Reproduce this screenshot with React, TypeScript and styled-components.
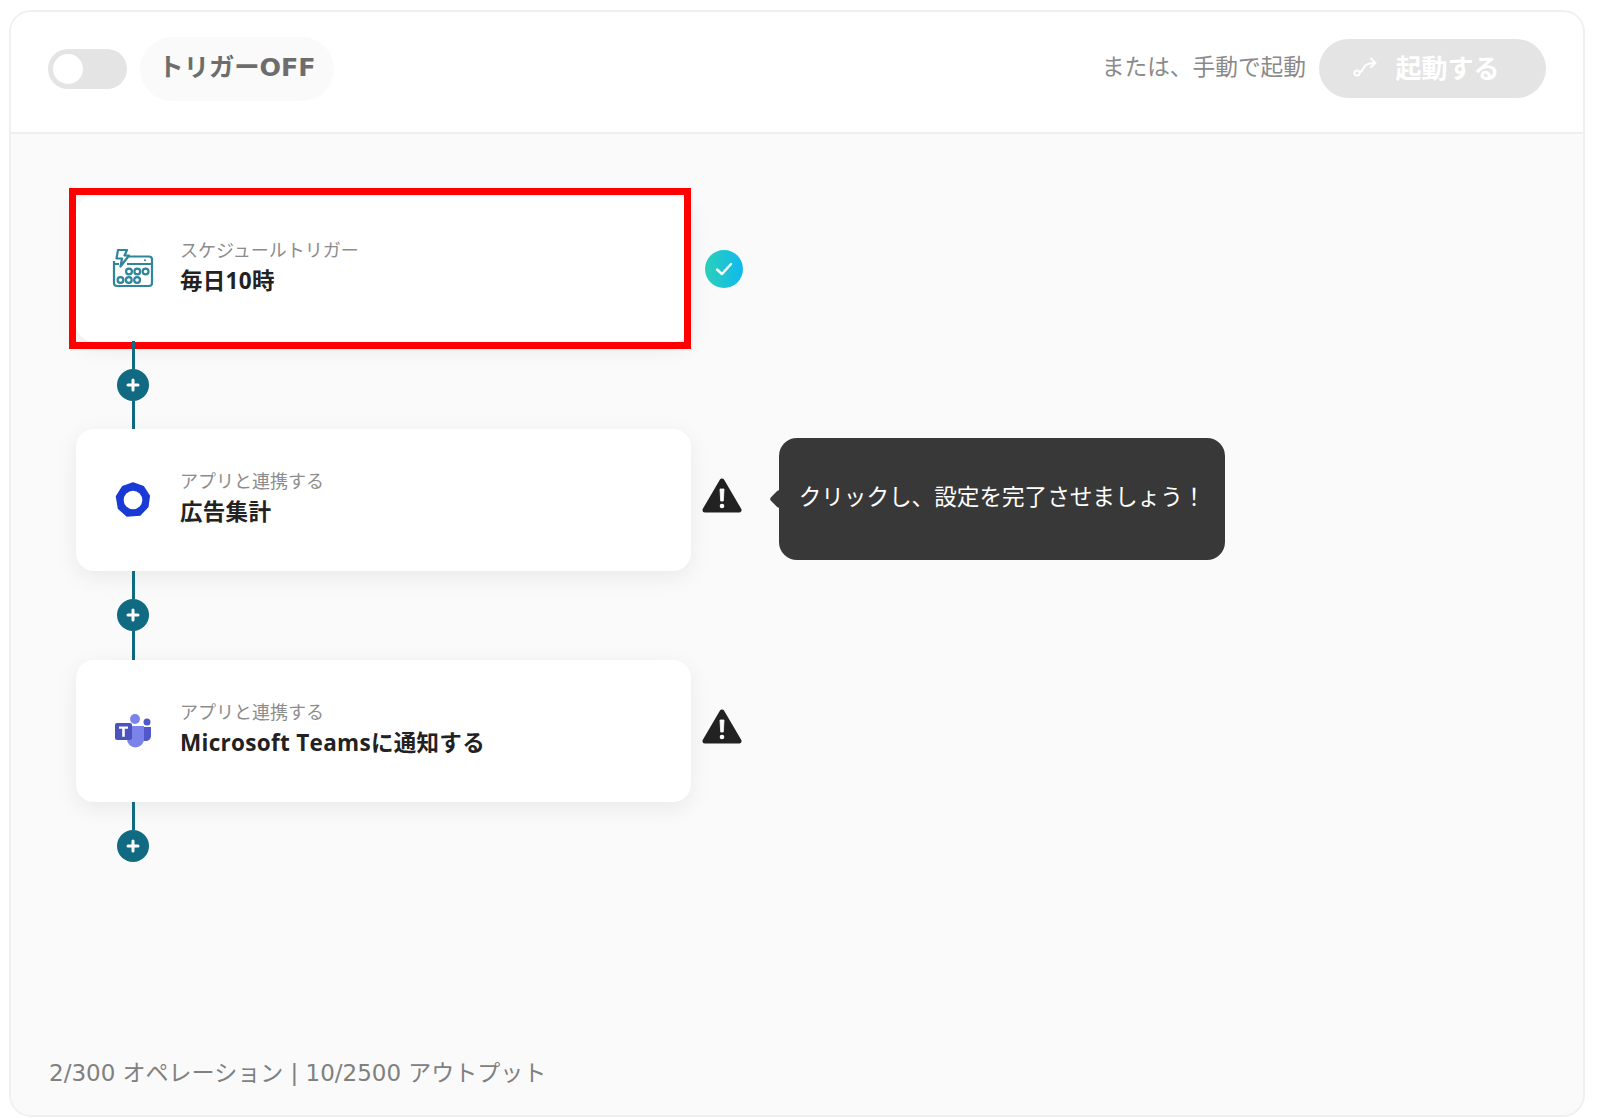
import React from "react";
import styled, { createGlobalStyle } from "styled-components";

const GlobalStyle = createGlobalStyle`
  html, body {
    margin: 0;
    padding: 0;
    background: #fff;
    font-family: "DejaVu Sans", "Noto Sans CJK JP", sans-serif;
  }
  * { box-sizing: border-box; }
`;

const Frame = styled.div`
  margin: 10px 15px 1px 9px;
  height: 1107px;
  border: 2px solid #f0f0f0;
  border-radius: 22px;
  overflow: hidden;
  display: flex;
  flex-direction: column;
  background: #fafafa;
`;

const Header = styled.header`
  height: 122px;
  flex: none;
  background: #fff;
  border-bottom: 2px solid #efefef;
  display: flex;
  align-items: center;
  justify-content: space-between;
  padding: 0 37px 7px 37px;
`;

const Group = styled.div`
  display: flex;
  align-items: center;
`;

const Toggle = styled.div`
  width: 79px;
  height: 40px;
  border-radius: 20px;
  background: #e4e4e4;
  display: flex;
  align-items: center;
  padding-left: 5px;
  &::before {
    content: "";
    width: 30px;
    height: 30px;
    border-radius: 50%;
    background: #fff;
  }
`;

const TriggerPill = styled.div`
  margin-left: 13px;
  height: 64px;
  width: 194px;
  border-radius: 32px;
  background: #fafafa;
  color: #6d6d6d;
  font-size: 25.3px;
  font-weight: 700;
  display: flex;
  align-items: center;
  justify-content: center;
  padding-bottom: 7px;
`;

const ManualLabel = styled.span`
  color: #8a8a8a;
  font-size: 22.7px;
  margin-right: 13px;
  padding-bottom: 6px;
`;

const StartButton = styled.button`
  width: 227px;
  height: 59px;
  border: none;
  border-radius: 30px;
  background: #e4e4e4;
  color: #fff;
  font-family: inherit;
  font-size: 26px;
  font-weight: 700;
  display: flex;
  align-items: center;
  justify-content: center;
  gap: 16px;
  padding: 0 12px 4px 0;
`;

const Body = styled.main`
  flex: 1;
  display: flex;
  flex-direction: column;
  padding: 62px 0 26px 38px;
`;

const Flow = styled.div`
  padding-left: 27px;
  flex: 1;
`;

const StepRow = styled.div`
  display: flex;
  align-items: center;
`;

const Card = styled.div<{ $highlight?: boolean }>`
  position: relative;
  width: 615px;
  height: ${(p) => (p.$highlight ? "146px" : "142px")};
  background: #fff;
  border-radius: 18px;
  box-shadow: 0 6px 22px rgba(0, 0, 0, 0.07);
  display: flex;
  align-items: center;
  padding-left: 33px;
  ${(p) =>
    p.$highlight &&
    `padding-bottom: 3px;
    &::after {
      content: "";
      position: absolute;
      inset: -8px 0 -7px -7px;
      border: 7px solid #ff0000;
    }`}
`;

const IconSlot = styled.div`
  width: 48px;
  height: 48px;
  flex: none;
  margin-right: 23px;
  display: flex;
  align-items: center;
  justify-content: center;
`;

const Texts = styled.div<{ $flush?: boolean }>`
  display: flex;
  flex-direction: column;
  gap: 1px;
  padding-bottom: ${(p) => (p.$flush ? "0" : "4px")};
`;

const SubLabel = styled.div`
  font-size: 18px;
  line-height: 26px;
  color: #8c8c8c;
`;

const Title = styled.div`
  font-family: "Open Sans", "Noto Sans CJK JP", sans-serif;
  font-size: 22.5px;
  letter-spacing: 0.3px;
  line-height: 32px;
  font-weight: 700;
  color: #222;
`;

const Status = styled.div<{ $warn?: boolean }>`
  width: 38px;
  margin-left: 14px;
  flex: none;
  display: flex;
  justify-content: center;
  ${(p) => p.$warn && "padding: 0 4px 8px 0;"}
  svg {
    flex: none;
  }
`;

const CheckBadge = styled.div`
  width: 38px;
  height: 38px;
  border-radius: 50%;
  background: linear-gradient(90deg, #2bd0b9, #0fb9ee);
  display: flex;
  align-items: center;
  justify-content: center;
`;

const Tooltip = styled.div`
  position: relative;
  margin: 0 0 2px 36px;
  width: 446px;
  height: 122px;
  border-radius: 18px;
  background: #383838;
  color: #fff;
  font-size: 22.6px;
  display: flex;
  align-items: center;
  justify-content: center;
  white-space: nowrap;
  padding-bottom: 8px;
  &::before {
    content: "";
    position: absolute;
    left: -7px;
    top: 54px;
    width: 14px;
    height: 14px;
    background: #383838;
    transform: rotate(45deg);
    border-radius: 3px;
  }
`;

const Connector = styled.div<{ $first?: boolean; $last?: boolean }>`
  position: relative;
  width: 32px;
  margin-left: 41px;
  margin-top: ${(p) => (p.$first ? "-1px" : "0")};
  height: ${(p) => (p.$last ? "60px" : p.$first ? "88px" : "89px")};
  display: flex;
  flex-direction: column;
  align-items: center;
`;

const LineTop = styled.div`
  width: 3px;
  flex: 0 0 28px;
  background: #0f6a82;
`;

const LineBottom = styled.div`
  width: 3px;
  flex: 1;
  background: #0f6a82;
`;

const AddDot = styled.div`
  width: 32px;
  height: 32px;
  flex: none;
  border-radius: 50%;
  background: #0f6a82;
  display: flex;
  align-items: center;
  justify-content: center;
`;

const Footer = styled.div`
  color: #808080;
  font-size: 23px;
  line-height: 32px;
`;

const RouteIcon = () => (
  <svg width="26" height="22" viewBox="0 0 26 22" fill="none" stroke="#fff" strokeWidth="2" strokeLinecap="round" strokeLinejoin="round">
    <circle cx="4" cy="17" r="2.6" />
    <path d="M7 16c3-1 3-4 5-6 2-2.500 5-3 10-3" />
    <path d="M18 2.500 22.500 7 18 11" />
  </svg>
);

const CalendarIcon = () => (
  <svg width="42" height="40" viewBox="0 0 42 40" fill="none" stroke="#2f8599" strokeWidth="2.200">
    <path d="M13 8.500H37a3 3 0 0 1 3 3v23.500a3 3 0 0 1-3 3H5a3 3 0 0 1-3-3V13" />
    <path d="M15 16H40M2 16h5" />
    <circle cx="33" cy="12.300" r="1" fill="#2f8599" stroke="none" />
    <path d="M6 2h9l-2.500 5.500h4.500l-8.500 11 1.500-8H4.500z" fill="#fff" strokeLinejoin="round" />
    {[17, 25.300, 33.600].map((x) => (
      <circle key={x} cx={x} cy="23.500" r="2.900" />
    ))}
    {[8.500, 16.800, 25.100].map((x) => (
      <circle key={x} cx={x} cy="32" r="2.900" />
    ))}
  </svg>
);

const RingIcon = () => (
  <svg width="38" height="38" viewBox="0 0 38 38">
    <path
      d="M19 2 29.500 5.800 35.300 15 33.800 25.800 26 34 13 35 4.500 27.500 2.500 15.500 8.500 5.800Z"
      fill="#1a3ad6"
      stroke="#1a3ad6"
      strokeWidth="1.500"
      strokeLinejoin="round"
    />
    <circle cx="19" cy="19" r="9.300" fill="#fff" />
  </svg>
);

const TeamsIcon = () => (
  <svg width="36" height="34" viewBox="0 0 36 34">
    <circle cx="32" cy="8" r="3.500" fill="#5059c9" />
    <path d="M26 13h10v9c0 3-2.500 5-5.500 5-2.500 0-4.500-1-4.500-4z" fill="#5059c9" />
    <circle cx="20" cy="5" r="5" fill="#7b83eb" />
    <path d="M12 12h17v13a8.500 8.500 0 0 1-17 0z" fill="#7b83eb" />
    <rect x="0" y="9" width="17" height="17" rx="2" fill="#4b53bc" />
    <path d="M4 12.500h9v2.300h-3.200v8h-2.600v-8H4z" fill="#fff" />
  </svg>
);

const WarningIcon = () => (
  <svg width="40" height="36" viewBox="0 0 40 36">
    <path d="M20 3 37 32H3Z" fill="#222" stroke="#222" strokeWidth="5" strokeLinejoin="round" />
    <path d="M18 11h4l-.7 12h-2.600z" fill="#fff" stroke="#fff" strokeWidth="0.800" strokeLinejoin="round" />
    <circle cx="20" cy="28" r="2.300" fill="#fff" />
  </svg>
);

const CheckIcon = () => (
  <svg width="20" height="16" viewBox="0 0 20 16" fill="none" stroke="#fff" strokeWidth="2.500" strokeLinecap="round" strokeLinejoin="round">
    <path d="M3 8.500 8 13 17 3" />
  </svg>
);

const PlusIcon = () => (
  <svg width="14" height="14" viewBox="0 0 14 14" fill="none" stroke="#fff" strokeWidth="3" strokeLinecap="round">
    <path d="M7 2v10M2 7h10" />
  </svg>
);

const App: React.FC = () => {
  return (
    <>
      <GlobalStyle />
      <Frame>
        <Header>
          <Group>
            <Toggle />
            <TriggerPill>トリガーOFF</TriggerPill>
          </Group>
          <Group>
            <ManualLabel>または、手動で起動</ManualLabel>
            <StartButton>
              <RouteIcon />
              起動する
            </StartButton>
          </Group>
        </Header>
        <Body>
          <Flow>
            <StepRow>
              <Card $highlight>
                <IconSlot>
                  <CalendarIcon />
                </IconSlot>
                <Texts $flush>
                  <SubLabel>スケジュールトリガー</SubLabel>
                  <Title>毎日10時</Title>
                </Texts>
              </Card>
              <Status>
                <CheckBadge>
                  <CheckIcon />
                </CheckBadge>
              </Status>
            </StepRow>
            <Connector $first>
              <LineTop />
              <AddDot>
                <PlusIcon />
              </AddDot>
              <LineBottom />
            </Connector>
            <StepRow>
              <Card>
                <IconSlot>
                  <RingIcon />
                </IconSlot>
                <Texts>
                  <SubLabel>アプリと連携する</SubLabel>
                  <Title>広告集計</Title>
                </Texts>
              </Card>
              <Status $warn>
                <WarningIcon />
              </Status>
              <Tooltip>クリックし、設定を完了させましょう！</Tooltip>
            </StepRow>
            <Connector>
              <LineTop />
              <AddDot>
                <PlusIcon />
              </AddDot>
              <LineBottom />
            </Connector>
            <StepRow>
              <Card>
                <IconSlot>
                  <TeamsIcon />
                </IconSlot>
                <Texts>
                  <SubLabel>アプリと連携する</SubLabel>
                  <Title>Microsoft Teamsに通知する</Title>
                </Texts>
              </Card>
              <Status $warn>
                <WarningIcon />
              </Status>
            </StepRow>
            <Connector $last>
              <LineTop />
              <AddDot>
                <PlusIcon />
              </AddDot>
            </Connector>
          </Flow>
          <Footer>2/300 オペレーション | 10/2500 アウトプット</Footer>
        </Body>
      </Frame>
    </>
  );
};

export default App;
